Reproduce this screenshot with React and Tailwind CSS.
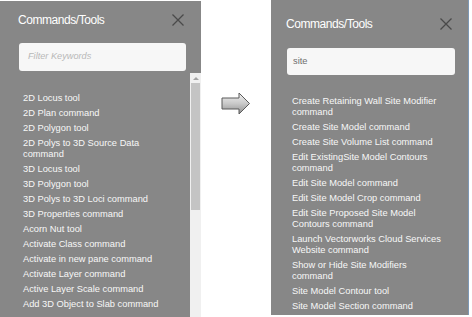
const leftItems = [
  '2D Locus tool',
  '2D Plan command',
  '2D Polygon tool',
  '2D Polys to 3D Source Data command',
  '3D Locus tool',
  '3D Polygon tool',
  '3D Polys to 3D Loci command',
  '3D Properties command',
  'Acorn Nut tool',
  'Activate Class command',
  'Activate in new pane command',
  'Activate Layer command',
  'Active Layer Scale command',
  'Add 3D Object to Slab command',
];

const rightItems = [
  'Create Retaining Wall Site Modifier command',
  'Create Site Model command',
  'Create Site Volume List command',
  'Edit ExistingSite Model Contours command',
  'Edit Site Model command',
  'Edit Site Model Crop command',
  'Edit Site Proposed Site Model Contours command',
  'Launch Vectorworks Cloud Services Website command',
  'Show or Hide Site Modifiers command',
  'Site Model Contour tool',
  'Site Model Section command',
];

function CloseIcon() {
  return (
    <svg width="12" height="12" viewBox="0 0 12 12" className="shrink-0">
      <path d="M0.5 0.5 L11.5 11.5 M11.5 0.5 L0.5 11.5" stroke="#4a4a4a" strokeWidth="1.3" fill="none" />
    </svg>
  );
}

function Arrow() {
  return (
    <svg width="30" height="23" viewBox="0 0 30 23">
      <defs>
        <linearGradient id="arrowFill" x1="0" y1="0" x2="0" y2="1">
          <stop offset="0" stopColor="#f2f2f2" />
          <stop offset="0.5" stopColor="#c9c9c9" />
          <stop offset="1" stopColor="#8f8f8f" />
        </linearGradient>
      </defs>
      <polygon
        points="1,6 18,6 18,1 28.5,11.5 18,22 18,17 1,17"
        fill="url(#arrowFill)"
        stroke="#5a5a5a"
        strokeWidth="1"
        strokeLinejoin="round"
      />
    </svg>
  );
}

function CommandList({ items, width }) {
  return (
    <ul className={`${width} text-[9.3px] leading-[11px] text-[#f7f7f7]`}>
      {items.map((item) => (
        <li key={item} className="py-[2px]">
          {item}
        </li>
      ))}
    </ul>
  );
}

export default function App() {
  return (
    <div className="w-[472px] h-[317px] bg-white flex items-start overflow-hidden font-['Liberation_Sans',Arial,sans-serif]">
      {/* Before: full list */}
      <div className="w-[201px] h-[317px] mt-[1px] bg-[#878787] flex flex-col shrink-0">
        <div className="flex items-center justify-between h-[16px] mt-[11px] pl-[18px] pr-[17px]">
          <span className="text-[12px] tracking-[-0.45px] text-white">Commands/Tools</span>
          <CloseIcon />
        </div>
        <div className="ml-[19px] mt-[15px] w-[167px] h-[28px] bg-[#f7f7f7] rounded-[3px] flex items-center pl-[9px]">
          <span className="text-[9.2px] italic text-[#b8b8b8]">Filter Keywords</span>
        </div>
        <div className="mt-[2px] flex-1 flex min-h-0 overflow-hidden">
          <div className="flex-1 pl-[23px] pt-[17.5px]">
            <CommandList items={leftItems} width="w-[150px]" />
          </div>
          <div className="w-[11px] bg-[#f0f0f0] flex flex-col items-center">
            <div className="h-[10px] flex items-center justify-center">
              <div className="w-0 h-0 border-l-[3px] border-r-[3px] border-b-[3px] border-l-transparent border-r-transparent border-b-[#a3a3a3]" />
            </div>
            <div className="w-[9px] h-[127px] bg-[#c4c4c4]" />
          </div>
        </div>
      </div>

      {/* Arrow */}
      <div className="w-[70px] shrink-0 flex justify-center pt-[92px]">
        <Arrow />
      </div>

      {/* After: filtered list */}
      <div className="w-[198px] h-[315px] bg-[#878787] border-r border-[#7d98b5] flex flex-col shrink-0">
        <div className="flex items-center justify-between h-[16px] mt-[16px] pl-[15px] pr-[16px]">
          <span className="text-[12px] tracking-[-0.45px] text-white">Commands/Tools</span>
          <CloseIcon />
        </div>
        <div className="ml-[16px] mt-[16px] w-[168px] h-[27px] bg-[#f7f7f7] rounded-[3px] flex items-center pl-[6px]">
          <span className="text-[9.3px] text-[#6f6f6f]">site</span>
        </div>
        <div className="pl-[21px] pt-[18.5px] overflow-hidden">
          <CommandList items={rightItems} width="w-[153px]" />
        </div>
      </div>
    </div>
  );
}
